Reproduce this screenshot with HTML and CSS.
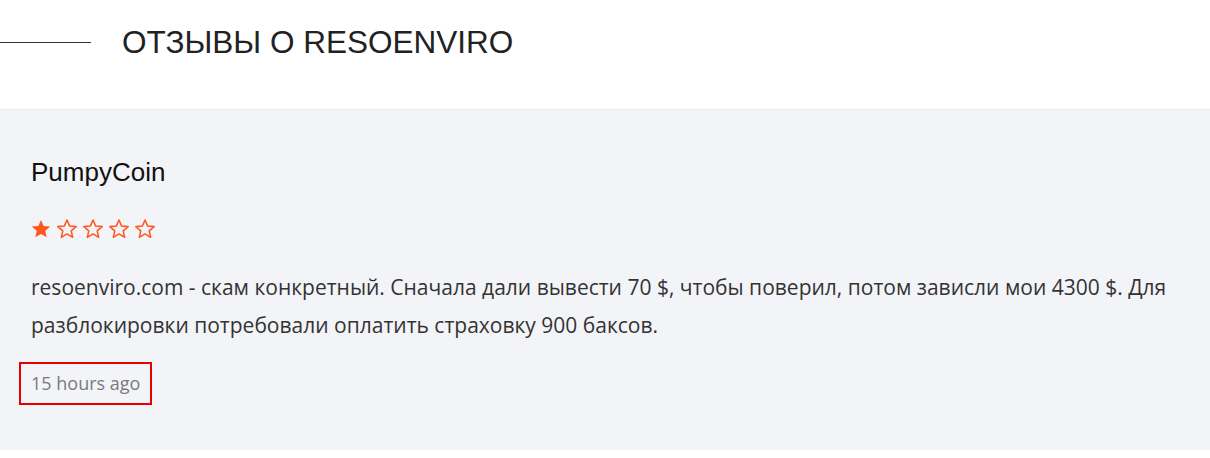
FILE: index.html
```html
<!DOCTYPE html>
<html lang="ru">
<head>
<meta charset="utf-8">
<title>Отзывы о Resoenviro</title>
<link rel="stylesheet" href="styles.css">
</head>
<body>
<section class="reviews">
  <header class="reviews-head">
    <span class="head-rule"></span>
    <h2 class="head-title">ОТЗЫВЫ О RESOENVIRO</h2>
  </header>
  <article class="review">
    <h3 class="review-author">PumpyCoin</h3>
    <div class="review-stars">
      <svg class="star" viewBox="0 0 24 24"><path class="star-full" d="M12 2.2l2.9 6.6 7.1.6-5.4 4.7 1.6 7-6.2-3.7-6.2 3.7 1.6-7L2 9.4l7.1-.6z"/></svg>
      <svg class="star" viewBox="0 0 24 24"><path class="star-empty" d="M12 2.2l2.9 6.6 7.1.6-5.4 4.7 1.6 7-6.2-3.7-6.2 3.7 1.6-7L2 9.4l7.1-.6z"/></svg>
      <svg class="star" viewBox="0 0 24 24"><path class="star-empty" d="M12 2.2l2.9 6.6 7.1.6-5.4 4.7 1.6 7-6.2-3.7-6.2 3.7 1.6-7L2 9.4l7.1-.6z"/></svg>
      <svg class="star" viewBox="0 0 24 24"><path class="star-empty" d="M12 2.2l2.9 6.6 7.1.6-5.4 4.7 1.6 7-6.2-3.7-6.2 3.7 1.6-7L2 9.4l7.1-.6z"/></svg>
      <svg class="star" viewBox="0 0 24 24"><path class="star-empty" d="M12 2.2l2.9 6.6 7.1.6-5.4 4.7 1.6 7-6.2-3.7-6.2 3.7 1.6-7L2 9.4l7.1-.6z"/></svg>
    </div>
    <p class="review-text">resoenviro.com - скам конкретный. Сначала дали вывести 70 $, чтобы поверил, потом зависли мои 4300 $. Для разблокировки потребовали оплатить страховку 900 баксов.</p>
    <div class="review-time">15 hours ago</div>
  </article>
</section>
</body>
</html>
```

FILE: styles.css
```css
* {
  box-sizing: border-box;
}

body {
  margin: 0;
  background: #ffffff;
  font-family: "Open Sans", "Liberation Sans", sans-serif;
}

.reviews-head {
  display: flex;
  align-items: center;
  gap: 31px;
  height: 109px;
  padding-bottom: 24px;
}

.head-rule {
  display: block;
  width: 91px;
  height: 1px;
  background: #333333;
}

.head-title {
  margin: 0;
  font-family: "Liberation Sans", Arial, sans-serif;
  font-size: 31.5px;
  font-weight: 400;
  color: #222222;
  line-height: 1;
}

.review {
  background: #f3f4f8;
  border-top: 1px solid #ebecef;
  padding: 46px 31px 38px;
  height: 341px;
}

.review-author {
  margin: 0;
  font-family: "Liberation Sans", Arial, sans-serif;
  font-size: 26px;
  font-weight: 400;
  color: #111111;
  line-height: 32px;
}

.review-stars {
  display: flex;
  gap: 4px;
  margin-top: 30px;
  margin-left: -1px;
}

.star {
  width: 22px;
  height: 22px;
  display: block;
}

.star-full {
  fill: #ff5722;
}

.star-empty {
  fill: none;
  stroke: #ff5722;
  stroke-width: 1.7;
  stroke-linejoin: round;
}

.review-text {
  margin: 28px 0 0;
  font-size: 21px;
  line-height: 38px;
  color: #333333;
}

.review-time {
  display: inline-block;
  margin: 18px 0 0 -12px;
  padding: 8px 10px;
  border: 2px solid #e60000;
  font-size: 18px;
  line-height: 23px;
  color: #7a7a7a;
}
```
